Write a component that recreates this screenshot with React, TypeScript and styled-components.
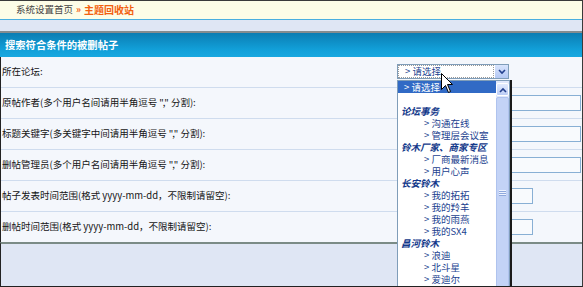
import React from "react";
import styled, { createGlobalStyle } from "styled-components";

const GlobalStyle = createGlobalStyle`
  html, body { margin: 0; padding: 0; background: #fff; }
  body { font-family: "Noto Sans CJK SC", "Liberation Sans", sans-serif; }
  * { box-sizing: border-box; }
`;

const Page = styled.div`
  position: relative;
  width: 583px;
  height: 287px;
  overflow: hidden;
  display: flex;
  flex-direction: column;
  border-top: 1px solid #3a3a3a;
  border-right: 1px solid #3a3a3a;
  border-bottom: 1px solid #222;
  font-size: 9.5px;
  line-height: 1;
`;

const Breadcrumb = styled.div`
  height: 19px;
  flex: none;
  display: flex;
  align-items: center;
  gap: 3px;
  padding-left: 16px;
  background: #fdfde7;
  border-bottom: 1px solid #4aafe0;
`;

const Crumb = styled.span<{ $current?: boolean }>`
  color: ${(p) => (p.$current ? "#f2600f" : "#444")};
  font-weight: ${(p) => (p.$current ? "bold" : "normal")};
  font-size: ${(p) => (p.$current ? "10px" : "9.5px")};
`;

const Sep = styled.span`
  color: #f2600f;
  font-weight: bold;
`;

const Band = styled.div`
  height: 13px;
  flex: none;
  background: #dfe6f4;
  border-bottom: 2px solid #858c90;
`;

const Header = styled.div`
  height: 24px;
  flex: none;
  display: flex;
  align-items: center;
  padding-left: 5px;
  background: linear-gradient(#0b7db3, #12a0d9 70%, #18a8e0);
  color: #fff;
  font-weight: bold;
  font-size: 10.3px;
`;

const Table = styled.div`
  flex: none;
  border-left: 1px solid #222;
  background: #f4f7fc;
`;

const Row = styled.div`
  height: 31px;
  display: grid;
  grid-template-columns: 396px 1fr;
  align-items: center;
  border-bottom: 1px solid #cfdcee;
  &:last-child { border-bottom: none; height: 30px; }
`;

const Label = styled.div`
  padding-left: 1px;
  color: #151515;
  white-space: nowrap;
`;

const Field = styled.div`
  display: flex;
  align-items: center;
`;

const TextInput = styled.div<{ $w: number }>`
  width: ${(p) => p.$w}px;
  height: 16px;
  background: #f8fafd;
  border: 1px solid #88afd4;
`;

const Footer = styled.div`
  flex: 1;
  border-left: 1px solid #222;
  border-top: 2px solid #7b8b86;
  background: #dfe6f4;
`;

const SelectBox = styled.div`
  width: 112px;
  height: 15px;
  display: flex;
  border: 1px solid #7f9db9;
  background: #fff;
  margin-top: -1px;
`;

const SelectText = styled.div`
  flex: 1;
  display: flex;
  align-items: center;
  padding-left: 6px;
  color: #1b3f8f;
  border: 1px dotted #999;
`;

const SelectButton = styled.div`
  width: 14px;
  display: flex;
  align-items: center;
  justify-content: center;
  background: linear-gradient(#d8e4fc, #b4c8f4);
  border-left: 1px solid #fff;
`;

const DropList = styled.div`
  position: absolute;
  left: 397px;
  top: 79px;
  width: 113px;
  height: 220px;
  display: flex;
  background: #fff;
  border: 1px solid #7f9db9;
  box-shadow: 2px 0 0 #1a1a1a;
`;

const Items = styled.div`
  flex: 1;
  display: flex;
  flex-direction: column;
`;

const Item = styled.div<{ $kind: "selected" | "group" | "option" | "blank" }>`
  height: 12px;
  line-height: 12px;
  overflow: hidden;
  white-space: nowrap;
  padding-left: ${(p) => (p.$kind === "option" ? 26 : p.$kind === "group" ? 3 : 6)}px;
  color: ${(p) => (p.$kind === "selected" ? "#fff" : p.$kind === "group" ? "#12388a" : "#1b3f8f")};
  background: ${(p) => (p.$kind === "selected" ? "#316ac5" : "transparent")};
  font-weight: ${(p) => (p.$kind === "group" ? "bold" : "normal")};
  font-style: ${(p) => (p.$kind === "group" ? "italic" : "normal")};
`;

const ScrollBar = styled.div`
  width: 13px;
  display: flex;
  flex-direction: column;
  background: #dfe7fb;
  padding-top: 2px;
`;

const ScrollButton = styled.div`
  height: 13px;
  display: flex;
  align-items: center;
  justify-content: center;
  background: linear-gradient(#e2ebfe, #bccdf6);
  border: 1px solid #fff;
  border-radius: 2px;
`;

const Thumb = styled.div`
  flex: 1;
  margin-top: 1px;
  display: flex;
  align-items: center;
  justify-content: center;
  background: #c3d3f6;
  border: 1px solid #afc3ee;
  border-radius: 2px;
`;

const Grip = styled.div`
  width: 7px;
  height: 6px;
  margin-top: -10px;
  background: repeating-linear-gradient(#eef3ff 0 1px, #8fa8dc 1px 2px);
`;

const Cursor = styled.svg`
  position: absolute;
  left: 441px;
  top: 72px;
`;

const Chevron = ({ up }: { up?: boolean }) => (
  <svg width="8" height="6" viewBox="0 0 8 6">
    <path
      d={up ? "M1 5 L4 2 L7 5" : "M1 1 L4 4 L7 1"}
      fill="none"
      stroke="#24408e"
      strokeWidth="1.6"
    />
  </svg>
);

type Entry = { kind: "selected" | "group" | "option" | "blank"; text: string };

const entries: Entry[] = [
  { kind: "selected", text: "> 请选择" },
  { kind: "blank", text: "" },
  { kind: "group", text: "论坛事务" },
  { kind: "option", text: "> 沟通在线" },
  { kind: "option", text: "> 管理层会议室" },
  { kind: "group", text: "铃木厂家、商家专区" },
  { kind: "option", text: "> 厂商最新消息" },
  { kind: "option", text: "> 用户心声" },
  { kind: "group", text: "长安铃木" },
  { kind: "option", text: "> 我的拓拓" },
  { kind: "option", text: "> 我的羚羊" },
  { kind: "option", text: "> 我的雨燕" },
  { kind: "option", text: "> 我的SX4" },
  { kind: "group", text: "昌河铃木" },
  { kind: "option", text: "> 浪迪" },
  { kind: "option", text: "> 北斗星" },
  { kind: "option", text: "> 爱迪尔" },
];

const rows: { label: string; input?: number }[] = [
  { label: "所在论坛:" },
  { label: "原帖作者(多个用户名间请用半角逗号 \",\" 分割):", input: 184 },
  { label: "标题关键字(多关键字中间请用半角逗号 \",\" 分割):", input: 184 },
  { label: "删帖管理员(多个用户名间请用半角逗号 \",\" 分割):", input: 184 },
  { label: "帖子发表时间范围(格式 yyyy-mm-dd，不限制请留空):", input: 136 },
  { label: "删帖时间范围(格式 yyyy-mm-dd，不限制请留空):", input: 136 },
];

export default function App() {
  return (
    <>
      <GlobalStyle />
      <Page>
        <Breadcrumb>
          <Crumb>系统设置首页</Crumb>
          <Sep>»</Sep>
          <Crumb $current>主题回收站</Crumb>
        </Breadcrumb>
        <Band />
        <Header>搜索符合条件的被删帖子</Header>
        <Table>
          {rows.map((r, i) => (
            <Row key={i}>
              <Label>{r.label}</Label>
              <Field>
                {i === 0 ? (
                  <SelectBox>
                    <SelectText>&gt; 请选择</SelectText>
                    <SelectButton>
                      <Chevron />
                    </SelectButton>
                  </SelectBox>
                ) : (
                  <TextInput $w={r.input ?? 184} />
                )}
              </Field>
            </Row>
          ))}
        </Table>
        <Footer />
        <DropList>
          <Items>
            {entries.map((e, i) => (
              <Item key={i} $kind={e.kind}>
                {e.text}
              </Item>
            ))}
          </Items>
          <ScrollBar>
            <ScrollButton>
              <Chevron up />
            </ScrollButton>
            <Thumb>
              <Grip />
            </Thumb>
          </ScrollBar>
        </DropList>
        <Cursor width="13" height="21" viewBox="0 0 13 21">
          <path
            d="M0.5 0.5 L0.5 16.5 L4.5 12.5 L7.5 19.5 L9.5 18.5 L6.5 11.5 L11.5 11.5 Z"
            fill="#fff"
            stroke="#000"
            strokeWidth="1"
          />
        </Cursor>
      </Page>
    </>
  );
}
